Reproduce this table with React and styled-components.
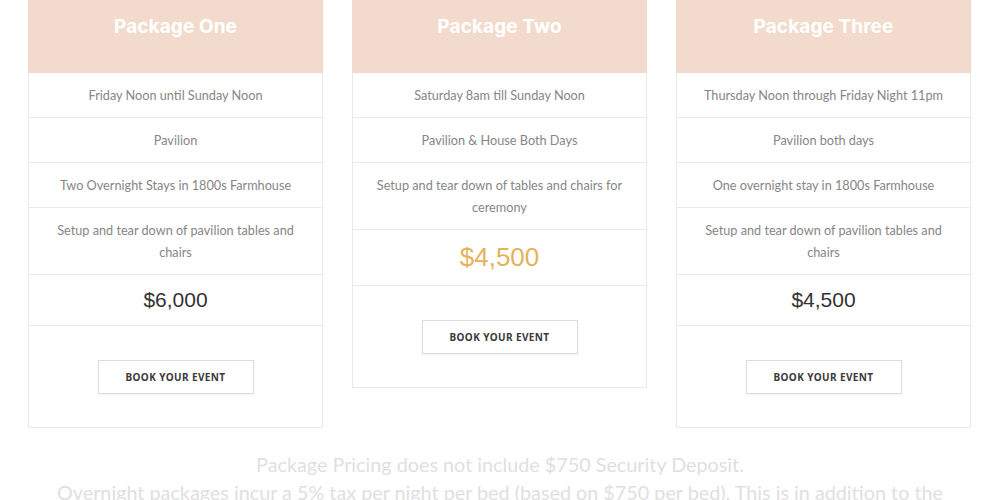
import React from 'react';
import styled, { createGlobalStyle } from 'styled-components';

const COLORS = {
  peach: '#f2dbcd',
  border: '#e9e9e9',
  text: '#868686',
  price: '#333333',
  gold: '#e5b25a',
  footer: '#e0e0e0',
};

const PACKAGES = [
  {
    name: 'Package One',
    rows: [
      'Friday Noon until Sunday Noon',
      'Pavilion',
      'Two Overnight Stays in 1800s Farmhouse',
      'Setup and tear down of pavilion tables and chairs',
    ],
    price: '$6,000',
  },
  {
    name: 'Package Two',
    rows: [
      'Saturday 8am till Sunday Noon',
      'Pavilion & House Both Days',
      'Setup and tear down of tables and chairs for ceremony',
    ],
    price: '$4,500',
    featured: true,
  },
  {
    name: 'Package Three',
    rows: [
      'Thursday Noon through Friday Night 11pm',
      'Pavilion both days',
      'One overnight stay in 1800s Farmhouse',
      'Setup and tear down of pavilion tables and chairs',
    ],
    price: '$4,500',
  },
];

const GlobalStyle = createGlobalStyle`
  html, body {
    margin: 0;
    background: #fff;
    overflow: hidden;
  }
`;

const App = () => (
  <Page>
    <GlobalStyle />
    <Grid>
      {PACKAGES.map((pkg) => (
        <Card key={pkg.name}>
          <Header>{pkg.name}</Header>
          {pkg.rows.map((row) => (
            <Row key={row}>{row}</Row>
          ))}
          <Price $featured={pkg.featured}>{pkg.price}</Price>
          <Action>
            <Button>Book your event</Button>
          </Action>
        </Card>
      ))}
    </Grid>
    <Note>
      Package Pricing does not include $750 Security Deposit.
      <br />
      Overnight packages incur a 5% tax per night per bed (based on $750 per bed). This is in addition to the
    </Note>
  </Page>
);

const Page = styled.div`
  width: 1000px;
  height: 500px;
  overflow: hidden;
`;

const Grid = styled.div`
  display: flex;
  align-items: flex-start;
  gap: 29px;
  padding-left: 28px;
`;

const Card = styled.div`
  width: 295px;
  box-sizing: border-box;
  border: 1px solid ${COLORS.border};
  border-top: none;
  background: #fff;
  text-align: center;
`;

const Header = styled.div`
  background: ${COLORS.peach};
  margin: 0 -1px;
  height: 73px;
  padding-top: 13px;
  box-sizing: border-box;
  color: #fff;
  font-family: Inter, 'Noto Sans', sans-serif;
  font-weight: 700;
  font-size: 19px;
  line-height: 28px;
  letter-spacing: 0.1px;
`;

const Row = styled.div`
  padding: 11px 22px;
  line-height: 22px;
  font-family: Lato, 'Open Sans', sans-serif;
  font-size: 12.7px;
  color: ${COLORS.text};
  border-bottom: 1px solid ${COLORS.border};
`;

const Price = styled.div`
  padding: 10px 20px;
  border-bottom: 1px solid ${COLORS.border};
  font-family: 'Liberation Sans', Arial, sans-serif;
  font-size: ${(p) => (p.$featured ? '26px' : '21px')};
  line-height: ${(p) => (p.$featured ? '35px' : '30px')};
  color: ${(p) => (p.$featured ? COLORS.gold : COLORS.price)};
`;

const Action = styled.div`
  padding: 34px 0 33px;
  display: flex;
  justify-content: center;
`;

const Button = styled.button`
  width: 156px;
  height: 34px;
  background: #fff;
  border: 1px solid #dcdcdc;
  box-shadow: 0 1px 2px rgba(0, 0, 0, 0.06);
  font-family: 'Noto Sans', Inter, sans-serif;
  font-weight: 700;
  font-size: 10px;
  letter-spacing: 0.4px;
  text-transform: uppercase;
  color: #3a3a3a;
  cursor: pointer;
`;

const Note = styled.p`
  margin: 22px 0 0;
  text-align: center;
  font-family: Lato, 'Open Sans', sans-serif;
  font-size: 19.8px;
  line-height: 28px;
  color: ${COLORS.footer};
  white-space: nowrap;
`;

export default App;
